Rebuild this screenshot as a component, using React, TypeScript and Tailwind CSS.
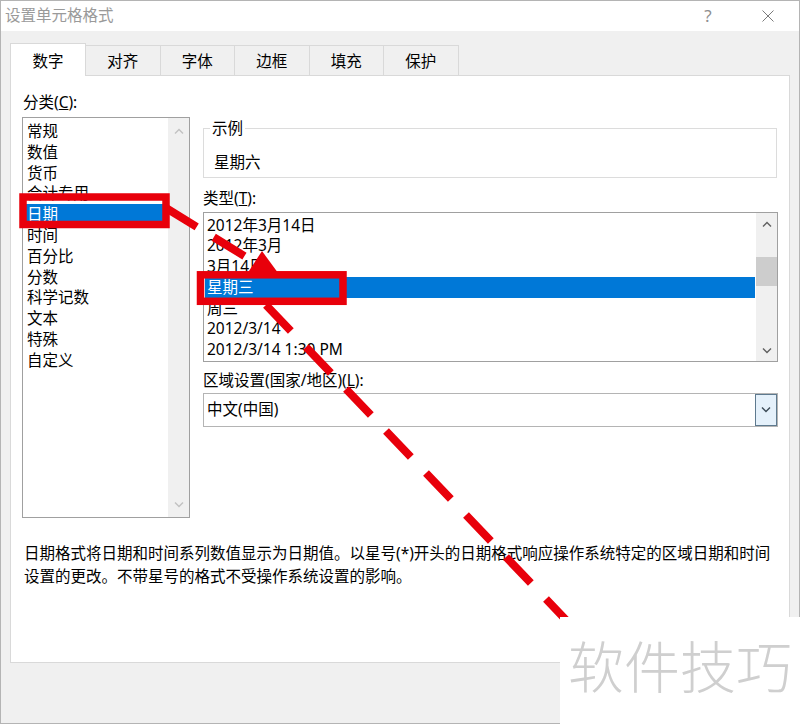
import React from 'react';

const tabs = ['数字', '对齐', '字体', '边框', '填充', '保护'];
const categories = ['常规', '数值', '货币', '会计专用', '日期', '时间', '百分比', '分数', '科学记数', '文本', '特殊', '自定义'];
const types = ['2012年3月14日', '2012年3月', '3月14日', '星期三', '周三', '2012/3/14', '2012/3/14 1:30 PM'];

const Chevron: React.FC<{ up?: boolean; color: string }> = ({ up, color }) => (
  <svg width="10" height="6" viewBox="0 0 10 6">
    <polyline points={up ? '1,5.5 5,1.5 9,5.5' : '1,0.5 5,4.5 9,0.5'} fill="none" stroke={color} strokeWidth="1.4" />
  </svg>
);

const App: React.FC = () => {
  return (
    <div className="relative w-[800px] h-[724px] overflow-hidden font-['Noto_Sans','Noto_Sans_CJK_SC',sans-serif] text-[15.5px] text-black">
      <div className="w-full h-full flex flex-col bg-[#f0f0f0] border border-[#b4b4b4]">
        {/* title bar */}
        <div className="h-[30px] bg-white flex items-center justify-between shrink-0">
          <span className="pl-[4px] text-[#9a9a9a]">设置单元格格式</span>
          <div className="flex items-center pr-[25px] gap-[44px]">
            <span className="w-[20px] text-center text-[#8f8f8f] text-[17px]">?</span>
            <svg width="12" height="12" viewBox="0 0 12 12">
              <path d="M0.5 0.5 L11.5 11.5 M11.5 0.5 L0.5 11.5" stroke="#7a7a7a" strokeWidth="1" />
            </svg>
          </div>
        </div>

        <div className="pt-[12px] pl-[9px]">
          {/* tabs */}
          <div className="flex items-end h-[32px]">
            {tabs.map((t, i) =>
              i === 0 ? (
                <div
                  key={t}
                  className="relative z-10 w-[76px] h-[33px] -mb-[1px] bg-white border border-b-0 border-[#d9d9d9] flex justify-center pt-[6px]"
                >
                  {t}
                </div>
              ) : (
                <div
                  key={t}
                  className="w-[74.5px] h-[30px] border-t border-r border-[#d9d9d9] flex justify-center pt-[4px]"
                >
                  {t}
                </div>
              )
            )}
          </div>

          {/* panel */}
          <div className="w-[780px] h-[588px] bg-white border border-[#d9d9d9] pl-[11px] pt-[16px]">
            <div className="flex">
              {/* category column */}
              <div className="w-[168px] flex flex-col">
                <div className="h-[21px] leading-[21px] ml-[1px]">
                  分类(<span className="underline">C</span>):
                </div>
                <div className="mt-[4px] h-[401px] border border-[#a0a0a0] flex">
                  <div className="flex-1 pt-[3px]">
                    {categories.map((c, i) => (
                      <div
                        key={c}
                        className={`h-[20.8px] leading-[20.8px] ml-[1px] pl-[3px] ${i === 4 ? 'bg-[#0078d7] text-white' : ''}`}
                      >
                        {c}
                      </div>
                    ))}
                  </div>
                  <div className="w-[21px] bg-[#f0f0f0] flex flex-col justify-between">
                    <div className="h-[26px] flex items-center justify-center">
                      <Chevron up color="#c2c2c2" />
                    </div>
                    <div className="h-[24px] flex items-center justify-center">
                      <Chevron color="#c2c2c2" />
                    </div>
                  </div>
                </div>
              </div>

              {/* right column */}
              <div className="ml-[13px] w-[575px] flex flex-col">
                <fieldset className="mt-[25.5px] w-[574px] border border-[#dcdcdc] pl-[6px] pt-[13px] pb-[4px]">
                  <legend className="px-[2px] leading-[21px]">示例</legend>
                  <div className="h-[21px] leading-[21px] pl-[4px]">星期六</div>
                </fieldset>

                <div className="mt-[10px] h-[21px] leading-[21px]">
                  类型(<span className="underline">T</span>):
                </div>
                <div className="mt-[3.5px] h-[150px] border border-[#a0a0a0] flex">
                  <div className="flex-1 pt-[1.5px]">
                    {types.map((t, i) => (
                      <div
                        key={t}
                        className={`h-[20.8px] leading-[20.8px] ml-[1px] mr-[1px] pl-[2px] ${i === 3 ? 'bg-[#0078d7] text-white' : ''}`}
                      >
                        {t}
                      </div>
                    ))}
                  </div>
                  <div className="w-[21px] bg-[#f0f0f0] flex flex-col">
                    <div className="h-[22px] flex items-center justify-center">
                      <Chevron up color="#606060" />
                    </div>
                    <div className="mt-[22px] h-[29px] bg-[#cdcdcd]" />
                    <div className="flex-1" />
                    <div className="h-[20px] flex items-center justify-center">
                      <Chevron color="#606060" />
                    </div>
                  </div>
                </div>

                <div className="mt-[7.5px] h-[21px] leading-[21px]">
                  区域设置(国家/地区)(<span className="underline">L</span>):
                </div>
                <div className="mt-[2.5px] h-[34px] border border-[#b4b4b4] flex items-center justify-between pl-[3px]">
                  <span>中文(中国)</span>
                  <div className="w-[22px] h-[32px] border border-[#5e7a8f] bg-[#e5f1fb] flex items-center justify-center">
                    <Chevron color="#3c4a56" />
                  </div>
                </div>
              </div>
            </div>

            <div className="mt-[24px] ml-[2px] leading-[23px] whitespace-nowrap">
              <div>日期格式将日期和时间系列数值显示为日期值。以星号(*)开头的日期格式响应操作系统特定的区域日期和时间</div>
              <div>设置的更改。不带星号的格式不受操作系统设置的影响。</div>
            </div>
          </div>
        </div>
      </div>

      {/* red annotation */}
      <svg className="absolute inset-0 pointer-events-none" width="800" height="724" viewBox="0 0 800 724">
        <line x1="166" y1="208" x2="246" y2="257" stroke="#e8000b" strokeWidth="8" strokeDasharray="36 20" />
        <line x1="266" y1="305" x2="566" y2="620" stroke="#e8000b" strokeWidth="8" strokeDasharray="36 22" />
        <polygon points="262,251 245,277 281,277" fill="#e8000b" />
        <rect x="23" y="197" width="143" height="27.5" fill="none" stroke="#e8000b" strokeWidth="7.5" />
        <rect x="200.5" y="274.8" width="142.5" height="26.5" fill="none" stroke="#e8000b" strokeWidth="7.5" />
      </svg>

      {/* watermark */}
      <div className="absolute right-0 bottom-0 w-[240px] h-[107px] bg-white flex items-center pl-[8px] pb-[14px]">
        <span className="text-[56px] leading-none font-light text-[#cfcfcf] font-['Noto_Sans_CJK_SC',sans-serif]">软件技巧</span>
      </div>
    </div>
  );
};

export default App;
